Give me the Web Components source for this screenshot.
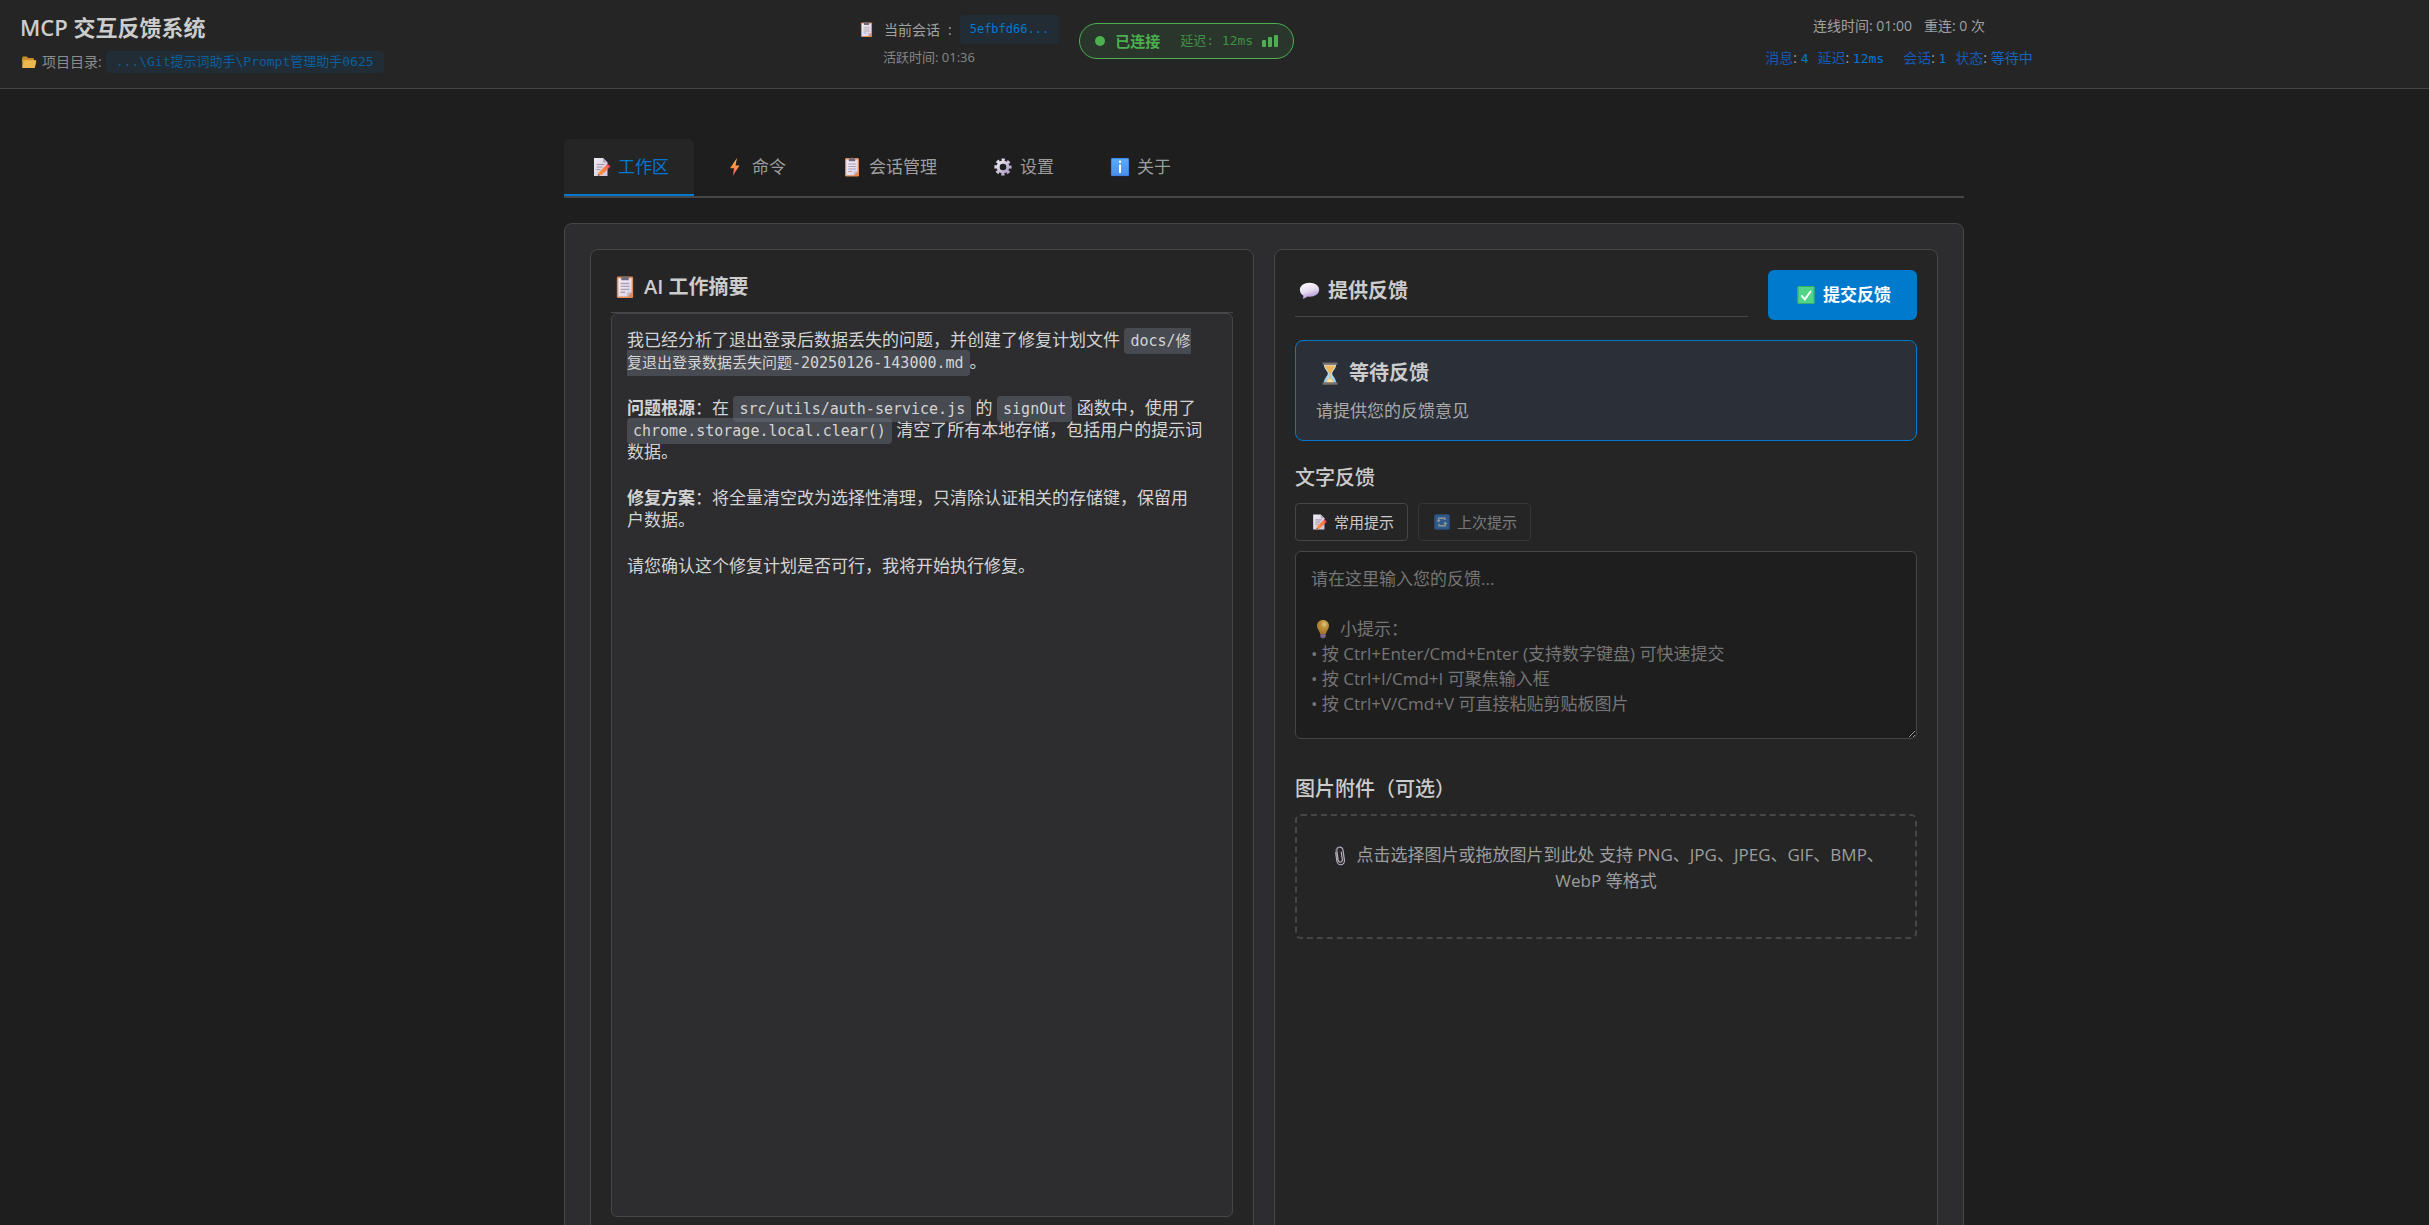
<!DOCTYPE html>
<html lang="zh-CN">
<head>
<meta charset="utf-8">
<meta name="viewport" content="width=device-width, initial-scale=1">
<title>MCP 交互反馈系统</title>
<style>
:root {
  --bg: #1e1e1e; --bar: #252526; --panel: #2d2d30; --line: #464647;
  --text: #cccccc; --muted: #9d9d9d; --accent: #007acc; --ok: #4caf50;
  --sans: "Open Sans", "Noto Sans CJK SC", sans-serif;
  --mono: "DejaVu Sans Mono", "Noto Sans CJK SC", monospace;
}
html, body { margin: 0; height: 100%; }
body { background: var(--bg); color: var(--text); font: 17px/26px var(--sans); overflow: hidden; }
</style>
</head>
<body>
<feedback-app></feedback-app>
<script>
const make = (name, markup, setup) => customElements.define(name, class extends HTMLElement {
  constructor() {
    super();
    this.attachShadow({ mode: 'open' });
  }
  connectedCallback() {
    const t = document.createElement('template');
    t.innerHTML = typeof markup === 'function' ? markup(this) : markup;
    this.shadowRoot.replaceChildren(t.content.cloneNode(true));
    if (setup) setup(this.shadowRoot, this);
  }
});

const icons = {
  clip: `<defs><linearGradient id="p" x2="1" y2="1"><stop stop-color="#f3eef8"/><stop offset="1" stop-color="#dcd3e6"/></linearGradient></defs>
<rect x="5" y="3" width="14" height="18.500" rx="1.200" fill="#dc8c59"/><path d="M6.300 4.500h11.400v12L14 20.200H6.300z" fill="url(#p)"/><path d="M17.700 16.500h-2.900a.8.8 0 0 0-.8.8v2.900z" fill="#c3b6d2"/>
<path d="M8.800 3.600h1.600a1.700 1.600 0 0 1 3.200 0h1.600v2.600H8.800z" fill="#716879"/><path d="M8.200 9h7.600M8.200 11.500h7.600M8.200 14h7.600M8.200 16.500h3.800" stroke="#aaa0b5" stroke-width="1.100"/>`,
  memo: `<defs><linearGradient id="p" x2="1" y2="1"><stop stop-color="#f1ecf5"/><stop offset="1" stop-color="#cfc6d9"/></linearGradient><linearGradient id="o" x2="1" y2="0"><stop stop-color="#ffa23c"/><stop offset="1" stop-color="#f2644c"/></linearGradient></defs>
<path d="M5 3h9l4.500 4.500V21H5z" fill="url(#p)"/><path d="M14 3v4.500h4.500z" fill="#b6a9c4"/><path d="M7.500 9.500h8M7.500 12h6M7.500 14.500h4" stroke="#9f95ab" stroke-width="1.200"/>
<path d="M8.800 20.800l1-3.600 7.600-7.200 2.800 2.800-7.600 7.200z" fill="url(#o)"/><path d="M17.400 10l1.300-1.200 2.800 2.800-1.300 1.200z" fill="#f0475e"/><path d="M8.800 20.800l.6-2 1.400 1.400z" fill="#54404d"/>`,
  bolt: `<defs><linearGradient id="b" x2="0" y2="1"><stop stop-color="#ffc042"/><stop offset=".5" stop-color="#ff9141"/><stop offset="1" stop-color="#f04858"/></linearGradient></defs><path d="M14 3L7 13.300h4L9.800 21 16.500 10.400h-4z" fill="url(#b)"/>`,
  gear: `<defs><linearGradient id="g" x2="1" y2="1"><stop stop-color="#efe9f4"/><stop offset="1" stop-color="#ae9cc3"/></linearGradient></defs><g fill="none" stroke="url(#g)"><circle cx="12" cy="12" r="4.900" stroke-width="3.200"/><circle cx="12" cy="12" r="7.200" stroke-width="2.800" stroke-dasharray="3.200 2.455" stroke-dashoffset="1.600"/></g>`,
  info: `<defs><linearGradient id="i" x2="0" y2="1"><stop stop-color="#57adff"/><stop offset="1" stop-color="#4b8dea"/></linearGradient></defs><rect x="3" y="3" width="18" height="18" rx="1.500" fill="url(#i)"/><rect x="3.400" y="3.400" width="17.200" height="17.200" rx="1.200" fill="none" stroke="#3d7bd6" stroke-width=".8"/><circle cx="12" cy="6.800" r="1.200" fill="#fff"/><path d="M12 9.400v8.600" stroke="#fff" stroke-width="2"/>`,
  folder: `<path d="M3 5.500q0-1 1-1h5l2 2.200h6.500q1 0 1 1v3H3z" fill="#c98a2b"/><path d="M3 19.500V7l2 3h15.500q1.200 0 1 1l-1.600 8q-.2 1-1.200 1H4q-1 0-1-.500z" fill="#e0a63c"/><path d="M5.800 9.500h14.900q1.200 0 .9 1.200l-1.800 8q-.3 1.300-1.300 1.300H3.400z" fill="#ecb94e"/>`,
  bubble: `<defs><linearGradient id="s" x2=".4" y2="1"><stop stop-color="#ffffff"/><stop offset=".6" stop-color="#e6dcf0"/><stop offset="1" stop-color="#b495d6"/></linearGradient></defs><path d="M12.500 5c4.800 0 8.200 2.500 8.200 6s-3.400 6-8.200 6c-.8 0-1.500 0-2.200-.2-.9 1.200-2.200 1.800-3.800 1.800.5-.7.8-1.600.7-2.600-1.900-1-3-2.800-3-5 0-3.500 3.500-6 8.300-6z" fill="url(#s)"/>`,
  check: `<rect x="3.500" y="3" width="17" height="18" rx="1.500" fill="#4fd488"/><rect x="4" y="3.500" width="16" height="17" rx="1" fill="none" stroke="#38a869" stroke-width=".9"/><path d="M7.300 12.300l3.500 4L16.900 8" fill="none" stroke="#fff" stroke-width="2"/>`,
  hourglass: `<defs><linearGradient id="h" x2="0" y2="1"><stop stop-color="#d6e8ef"/><stop offset="1" stop-color="#96cdf2"/></linearGradient></defs><path d="M6.800 4.500h10.400c0 4.400-3.300 5.700-3.300 8s3.300 3.700 3.300 8H6.800c0-4.300 3.300-5.700 3.300-8s-3.300-3.600-3.300-8z" fill="url(#h)"/><path d="M7.700 5.500h8.600c-.3 3.200-3.400 4.500-3.800 7.500l-.1 3 3.600 4.500H8l3.600-4.500-.1-3c-.4-3-3.500-4.300-3.800-7.500z" fill="#f4b656"/><path d="M9.200 20.500c.5-2.400 1.900-3.600 2.800-3.600s2.300 1.200 2.800 3.600z" fill="#ffe19a"/><path d="M5.600 3h12.800v2H5.600zM5.600 20h12.800v2H5.600z" fill="#75706f"/>`,
  repeat: `<rect x="3" y="3" width="18" height="18" rx="1.500" fill="#3b93ef"/><rect x="3.500" y="3.500" width="17" height="17" rx="1" fill="none" stroke="#2f74c8"/><path d="M8 11V7.500h7.500v2M16 13v3.500H8.500v-2" fill="none" stroke="#fff" stroke-width="1.700"/><path d="M5.600 9.500h4.800L8 12.500zM13.600 14.500h4.800L16 11.500z" fill="#fff"/>`,
  bulb: `<defs><radialGradient id="l" cx=".6" cy=".3" r=".7"><stop stop-color="#ffe9a0"/><stop offset=".4" stop-color="#dba53c"/><stop offset="1" stop-color="#bd842b"/></radialGradient></defs><path d="M12 3c3.700 0 6 2.500 6 5.700 0 3.200-2.400 4.600-3.200 8.300H9.200C8.400 13.300 6 11.900 6 8.700 6 5.500 8.300 3 12 3z" fill="url(#l)"/><path d="M9.400 17h5.200v2.800q0 1.600-2.600 1.600t-2.600-1.600z" fill="#7c6691"/><path d="M9.400 18.800h5.200" stroke="#a698b5" stroke-width=".8"/>`,
  paperclip: `<g fill="none" stroke="#b9aebf" stroke-width="1.200" stroke-linecap="round" transform="rotate(-8 12 12)"><path d="M8.200 8v8.500a3.800 4.300 0 0 0 7.600 0V6.500a3.100 3.300 0 0 0-6.200 0v9.300a2.100 2.400 0 0 0 4.200 0V8.300"/></g><path d="M7.200 7.500q.5-4 4.300-4" fill="none" stroke="#81767f" stroke-width=".8"/>`
};

make('ui-icon', el => `<style>
:host { display: inline-block; flex: none; width: var(--icon, 24px); height: var(--icon, 24px); }
svg { display: block; width: 100%; height: 100%; }
</style><svg viewBox="0 0 24 24" aria-hidden="true">${icons[el.getAttribute('name')]}</svg>`);

make('project-title', `<style>
:host { display: block; }
h1 { margin: 0; font-size: 22px; line-height: 30px; font-weight: 600; }
p { margin: 9px 0 0; display: flex; align-items: center; gap: 4px; font-size: 14px; line-height: 22px; color: #8c8c8c; --icon: 18px; }
code { padding: 0 10px; border-radius: 4px; background: #222c34; color: #0b5f9e; font: 13px/22px var(--mono); }
</style>
<h1>MCP 交互反馈系统</h1>
<p><ui-icon name="folder"></ui-icon><span>项目目录:</span><code>...\\Git提示词助手\\Prompt管理助手0625</code></p>`);

make('session-info', `<style>
:host { display: block; }
.row { display: flex; align-items: center; gap: 8px; font-size: 14px; line-height: 29px; color: #a2a2a2; --icon: 19px; }
button { border: 0; border-radius: 4px; padding: 0 10px; background: #222c34; color: #0078d4; font: 12px/29px var(--mono); }
.time { padding-left: 26px; font-size: 13px; line-height: 18px; margin-top: 4px; color: #858585; }
</style>
<div class="row"><ui-icon name="clip"></ui-icon><span>当前会话</span><span>:</span><button type="button">5efbfd66...</button></div>
<div class="time">活跃时间: 01:36</div>`);

make('connection-badge', `<style>
:host { display: flex; align-items: center; height: 34px; padding: 0 15px; border: 1px solid var(--ok); border-radius: 18px; background: #2a362b; color: var(--ok); }
.dot { width: 10px; height: 10px; border-radius: 50%; background: var(--ok); margin-right: 10px; }
b { font-size: 15px; font-weight: 600; }
.lag { margin: 0 9px 0 20px; font: 13px/20px var(--mono); color: #409044; }
.bars { display: flex; align-items: flex-end; gap: 2px; }
.bars i { width: 4px; border-radius: 1px; background: var(--ok); height: 7px; }
.bars i:nth-child(2) { height: 10px; } .bars i:nth-child(3) { height: 12px; }
</style>
<span class="dot"></span><b>已连接</b><span class="lag">延迟: 12ms</span><span class="bars"><i></i><i></i><i></i></span>`);

make('connection-stats', `<style>
:host { display: flex; flex-direction: column; align-items: center; gap: 12px; line-height: 20px; color: #a0a0a0; font-size: 14px; }
div { display: flex; gap: 12px; }
.live { gap: 9px; }
.live .wide { margin-left: 10px; }
.k { color: #1559b5; } .v { color: #0078d4; font: 13px/20px var(--mono); }
.w { color: #1565c0; }
</style>
<div><span>连线时间: 01:00</span><span>重连: 0 次</span></div>
<div class="live"><span><span class="k">消息</span>: <span class="v">4</span></span><span><span class="k">延迟</span>: <span class="v">12ms</span></span><span class="wide"><span class="k">会话</span>: <span class="v">1</span></span><span><span class="k">状态</span>: <span class="w">等待中</span></span></div>`);

make('app-header', `<style>
:host { display: block; }
header { display: grid; grid-template-columns: 837fr 532fr 1020fr; box-sizing: border-box; height: 89px; padding: 0 20px; background: var(--bar); border-bottom: 1px solid var(--line); }
project-title { padding-top: 12px; }
.mid { display: flex; align-items: flex-start; gap: 20px; padding-top: 15px; }
connection-badge { margin-top: 8px; }
connection-stats { padding-top: 16px; }
</style>
<header><project-title></project-title><div class="mid"><session-info></session-info><connection-badge></connection-badge></div><connection-stats></connection-stats></header>`);

make('tab-bar', `<style>
:host { display: block; }
nav { display: flex; gap: 4px; border-bottom: 2px solid var(--line); }
button { display: flex; align-items: center; gap: 5px; height: 57px; padding: 0 25px; border: 0; border-bottom: 2px solid transparent; border-radius: 6px 6px 0 0; background: none; color: var(--muted); font: 17px/24px var(--sans); }
button[aria-selected=true] { background: var(--bar); color: #0078d4; border-bottom-color: var(--accent); }
</style>
<nav role="tablist">
<button type="button" role="tab" aria-selected="true"><ui-icon name="memo"></ui-icon>工作区</button>
<button type="button" role="tab"><ui-icon name="bolt"></ui-icon>命令</button>
<button type="button" role="tab"><ui-icon name="clip"></ui-icon>会话管理</button>
<button type="button" role="tab"><ui-icon name="gear"></ui-icon>设置</button>
<button type="button" role="tab"><ui-icon name="info"></ui-icon>关于</button>
</nav>`);

make('ui-card', `<style>
:host { display: block; box-sizing: border-box; padding: 20px; border: 1px solid var(--line); border-radius: 8px; background: var(--bar); min-width: 0; }
</style><slot></slot>`);

make('card-heading', el => `<style>
:host { display: block; }
h2 { display: flex; align-items: center; gap: 5px; margin: 0; height: 34px; padding-bottom: 8px; border-bottom: 1px solid var(--line); font-size: 20px; line-height: 34px; font-weight: 600; --icon: 28px; }
</style><h2><ui-icon name="${el.getAttribute('icon')}"></ui-icon><span><slot></slot></span></h2>`);

make('ai-summary', `<style>
:host { display: block; }
.box { box-sizing: border-box; min-height: calc(100vh - 321px); padding: 15px; border: 1px solid var(--line); border-radius: 6px; background: var(--panel); }
.prose { max-width: 577px; line-height: 22px; color: #d4d4d4; }
p { margin: 0 0 24px; }
strong { font-weight: 700; }
code { padding: 4px 6px; border-radius: 4px; background: rgba(110, 118, 129, .4); font: 15px/15px var(--mono); }
</style>
<card-heading icon="clip">AI 工作摘要</card-heading>
<div class="box"><div class="prose">
<p>我已经分析了退出登录后数据丢失的问题，并创建了修复计划文件 <code>docs/修复退出登录数据丢失问题-20250126-143000.md</code>。</p>
<p><strong>问题根源</strong>：在 <code>src/utils/auth-service.js</code> 的 <code>signOut</code> 函数中，使用了 <code>chrome.storage.local.clear()</code> 清空了所有本地存储，包括用户的提示词数据。</p>
<p><strong>修复方案</strong>：将全量清空改为选择性清理，只清除认证相关的存储键，保留用户数据。</p>
<p>请您确认这个修复计划是否可行，我将开始执行修复。</p>
</div></div>`);

make('status-notice', `<style>
:host { display: block; box-sizing: border-box; padding: 16px 20px; border: 1px solid var(--accent); border-radius: 8px; background: #2a2f38; }
h3 { display: flex; align-items: center; gap: 5px; margin: 0 0 8px; font-size: 20px; line-height: 32px; font-weight: 600; --icon: 28px; }
p { margin: 0; line-height: 27px; color: #a8a8a8; }
</style><h3><ui-icon name="hourglass"></ui-icon><span>等待反馈</span></h3><p>请提供您的反馈意见</p>`);

make('text-feedback', `<style>
:host { display: block; }
label { display: block; font-size: 20px; line-height: 28px; font-weight: 500; }
.tools { display: flex; gap: 10px; margin: 11px 0 10px; --icon: 20px; }
button { display: flex; align-items: center; gap: 5px; height: 38px; padding: 0 13px; border: 1px solid var(--line); border-radius: 4px; background: var(--bar); color: var(--text); font: 15px/20px var(--sans); }
button:disabled { opacity: .5; }
.field { display: grid; }
.field > * { grid-area: 1 / 1; }
textarea { box-sizing: border-box; width: 100%; min-height: 188px; padding: 15px; border: 1px solid var(--line); border-radius: 6px; background: var(--bg); color: var(--text); font: 17px/25px var(--sans); resize: vertical; }
.hint { padding: 15px 16px; line-height: 25px; color: #757575; pointer-events: none; z-index: 1; height: 0; }
.hint div { display: flex; align-items: center; min-height: 25px; gap: 5px; white-space: pre; }
.hint ui-icon { opacity: .85; }
.field:has(textarea:not(:placeholder-shown)) .hint { display: none; }
</style>
<label for="fb">文字反馈</label>
<div class="tools"><button type="button"><ui-icon name="memo"></ui-icon>常用提示</button><button type="button" disabled><ui-icon name="repeat"></ui-icon>上次提示</button></div>
<div class="field"><textarea id="fb" placeholder=" "></textarea>
<div class="hint"><div>请在这里输入您的反馈...</div><div></div><div><ui-icon name="bulb"></ui-icon>小提示：</div><div>• 按 Ctrl+Enter/Cmd+Enter (支持数字键盘) 可快速提交</div><div>• 按 Ctrl+I/Cmd+I 可聚焦输入框</div><div>• 按 Ctrl+V/Cmd+V 可直接粘贴剪贴板图片</div></div></div>`);

make('image-drop', `<style>
:host { display: block; }
h3 { margin: 0 0 11px; font-size: 20px; line-height: 28px; font-weight: 500; }
label { display: block; box-sizing: border-box; min-height: 125px; padding: 26px 30px; border: 2px dashed var(--line); border-radius: 6px; text-align: center; line-height: 26px; color: var(--muted); }
ui-icon { vertical-align: middle; }
input { position: absolute; width: 1px; height: 1px; opacity: 0; }
</style>
<h3>图片附件（可选）</h3>
<label for="img"><ui-icon name="paperclip"></ui-icon> 点击选择图片或拖放图片到此处 支持 PNG、JPG、JPEG、GIF、BMP、WebP 等格式</label><input id="img" type="file" accept="image/*" multiple>`);

make('feedback-panel', `<style>
:host { display: block; }
.head { display: flex; align-items: center; gap: 20px; margin-bottom: 20px; }
card-heading { flex: 1; }
button { display: flex; align-items: center; gap: 5px; height: 50px; padding: 0 26px; border: 0; border-radius: 6px; background: var(--accent); color: #fff; font: 600 17px/24px var(--sans); }
text-feedback { margin-top: 23px; }
image-drop { margin-top: 36px; }
</style>
<div class="head"><card-heading icon="bubble">提供反馈</card-heading><button type="button"><ui-icon name="check"></ui-icon>提交反馈</button></div>
<status-notice></status-notice><text-feedback></text-feedback><image-drop></image-drop>`);

make('feedback-app', `<style>
:host { display: block; }
.body { padding: 50px 0 0 99px; }
main { max-width: 1400px; margin: 0 auto; }
.panel { display: grid; grid-template-columns: 1fr 1fr; gap: 20px; margin-top: 25px; padding: 25px; border: 1px solid var(--line); border-radius: 8px; background: var(--panel); }
</style>
<app-header></app-header>
<div class="body"><main><tab-bar></tab-bar><section class="panel"><ui-card><ai-summary></ai-summary></ui-card><ui-card><feedback-panel></feedback-panel></ui-card></section></main></div>`);
</script>
</body>
</html>
